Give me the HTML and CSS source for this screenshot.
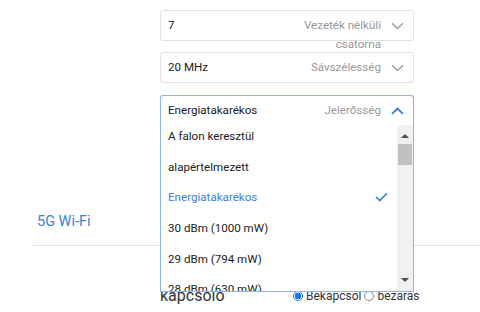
FILE: index.html
```html
<!DOCTYPE html>
<html lang="hu">
<head>
<meta charset="utf-8">
<link rel="stylesheet" href="styles.css">
</head>
<body>
<div class="page">
  <div class="fields">
    <div class="field">
      <span class="value">7</span>
      <span class="label label-wrap">Vezeték nélküli csatorna</span>
      <svg class="chev" width="13" height="8" viewBox="0 0 13 8"><path d="M1 1.2 L6.5 6.5 L12 1.2" fill="none" stroke="#9a9a9a" stroke-width="1.3"/></svg>
    </div>
    <div class="field">
      <span class="value">20 MHz</span>
      <span class="label">Sávszélesség</span>
      <svg class="chev" width="13" height="8" viewBox="0 0 13 8"><path d="M1 1.2 L6.5 6.5 L12 1.2" fill="none" stroke="#9a9a9a" stroke-width="1.3"/></svg>
    </div>
    <div class="field field-open">
      <span class="value">Energiatakarékos</span>
      <span class="label">Jelerősség</span>
      <svg class="chev" width="13" height="8" viewBox="0 0 13 8"><path d="M1 6.8 L6.5 1.5 L12 6.8" fill="none" stroke="#3b7ddd" stroke-width="1.8"/></svg>
    </div>
  </div>

  <div class="section-head">5G Wi-Fi</div>

  <div class="row">
    <span class="row-label">kapcsolo</span>
    <span class="radios"><span class="radio radio-on"></span>Bekapcsol <span class="radio"></span>bezárás</span>
  </div>

  <div class="dropdown">
    <div class="options">
      <div class="option">A falon keresztül</div>
      <div class="option">alapértelmezett</div>
      <div class="option option-selected">Energiatakarékos
        <svg class="check" width="13" height="10" viewBox="0 0 13 10"><path d="M1 5 L4.8 8.6 L12 1.2" fill="none" stroke="#3b7ddd" stroke-width="1.6"/></svg>
      </div>
      <div class="option">30 dBm (1000 mW)</div>
      <div class="option">29 dBm (794 mW)</div>
      <div class="option">28 dBm (630 mW)</div>
    </div>
    <div class="scrollbar">
      <span class="arrow-up"></span>
      <span class="thumb"></span>
      <span class="arrow-down"></span>
    </div>
  </div>
</div>
</body>
</html>
```

FILE: styles.css
```css
* { box-sizing: border-box; }
html, body { margin: 0; padding: 0; background: #fff; }
body {
  width: 480px;
  height: 312px;
  overflow: hidden;
  font-family: "Roboto", "Open Sans", sans-serif;
  font-size: 11.6px;
  color: #222;
}
.page { position: relative; height: 312px; }

.fields {
  padding: 10px 0 0 160px;
  width: 414px;
}
.field {
  display: flex;
  align-items: flex-start;
  height: 31px;
  border: 1px solid #e1e1e1;
  border-radius: 3px;
  padding: 5px 9px 0 7px;
  margin-bottom: 11px;
  line-height: 19px;
}
.field:nth-child(2) { margin-bottom: 12px; }
.field-open {
  border-color: #8cb6ee;
  border-bottom-color: #e6e6e6;
  border-radius: 3px 3px 0 0;
}
.value { flex: 1; color: #1a1a1a; white-space: nowrap; }
.label {
  color: #999;
  text-align: right;
  white-space: nowrap;
}
.label-wrap {
  white-space: normal;
  width: 84px;
  height: 19px;
}
.chev { margin: 6px 0 0 10px; flex: none; }

.section-head {
  margin: 86px 0 0 33px;
  padding: 0 0 13px 4px;
  border-bottom: 1px solid #e3e3e3;
  color: #3d7fd9;
  font-size: 14.5px;
  line-height: 20px;
}

.row {
  display: flex;
  align-items: center;
  padding: 41px 0 0 160px;
}
.row-label {
  width: 133px;
  font-size: 16px;
  line-height: 18px;
  color: #333;
}
.radios {
  display: inline-block;
  font-size: 12px;
  color: #333;
  white-space: nowrap;
}
.radio {
  display: inline-block;
  vertical-align: -1px;
  width: 10px;
  height: 10px;
  border-radius: 50%;
  border: 1px solid #8a8a8a;
  margin-right: 3px;
  background: #fff;
}
.radio-on {
  border-color: #1a73e8;
  background: radial-gradient(circle, #1a73e8 0 3px, #fff 3.5px);
}

.dropdown {
  position: absolute;
  left: 160px;
  top: 125px;
  width: 254px;
  height: 167px;
  border: 1px solid #8cb6ee;
  border-top: none;
  background: #fff;
  overflow: hidden;
  z-index: 2;
}
.options {
  position: absolute;
  left: 0;
  right: 16px;
  top: -4px;
}
.option {
  display: flex;
  align-items: center;
  justify-content: space-between;
  height: 30.6px;
  padding: 0 9px 0 7px;
  white-space: nowrap;
  color: #222;
}
.option-selected { color: #3d7fd9; }
.check { flex: none; }

.scrollbar {
  position: absolute;
  right: 0;
  top: 0;
  bottom: 0;
  width: 16px;
  background: #f1f1f1;
}
.arrow-up, .arrow-down {
  position: absolute;
  left: 4px;
  width: 0;
  height: 0;
  border-left: 4px solid transparent;
  border-right: 4px solid transparent;
}
.arrow-up { top: 9px; border-bottom: 4px solid #505050; }
.arrow-down { bottom: 9px; border-top: 4px solid #505050; }
.thumb {
  position: absolute;
  left: 1px;
  right: 1px;
  top: 19px;
  height: 21px;
  background: #c1c1c1;
}
```
